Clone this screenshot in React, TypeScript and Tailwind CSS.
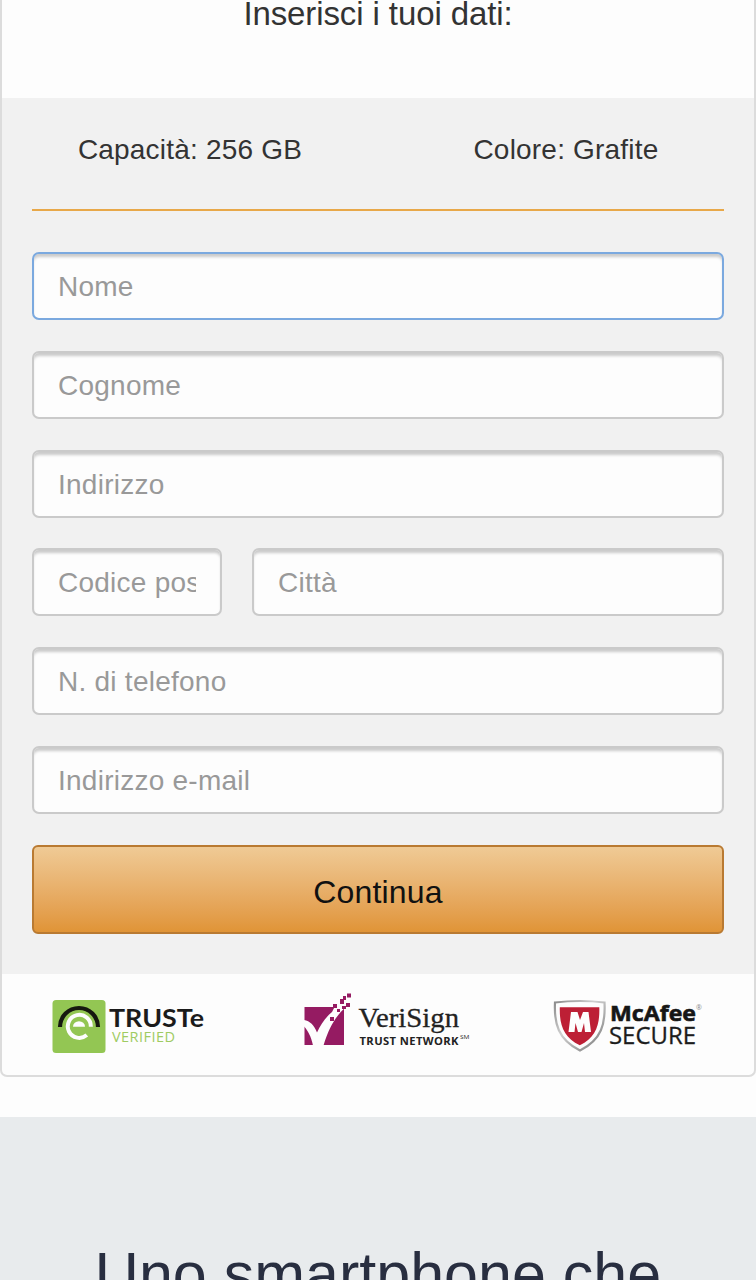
import clsx from 'clsx'

const options = ['Capacità: 256 GB', 'Colore: Grafite']

function Field({ label, className, active = false }: { label: string; className?: string; active?: boolean }) {
  return (
    <input
      type="text"
      placeholder={label}
      className={clsx(
        'block h-[68px] min-w-0 rounded-[7px] border-2 bg-[#fdfdfd] px-6 pt-0.5 text-[28px] tracking-[0.25px] text-[#333] shadow-[inset_0_4px_3px_-1px_rgba(0,0,0,0.2)] outline-none placeholder:text-[#999] placeholder:opacity-100',
        active ? 'border-[#7ba9df]' : 'border-[#cacaca]',
        className,
      )}
    />
  )
}

function TrusteLogo() {
  return (
    <svg width="156" height="64" viewBox="50 993 156 64">
      <rect x="52.5" y="1000" width="53" height="53" rx="3.5" fill="#93c653" />
      <path d="M60 1027a19 19 0 0 1 38 0" fill="none" stroke="#16180f" strokeWidth="4.2" />
      <path d="M90.800 1026.800a11.500 11.500 0 1 0-4 8.300" fill="none" stroke="#fdfdfd" strokeWidth="4" />
      <path d="M73 1026.800a6 5.600 0 0 1 12 0z" fill="#fdfdfd" />
      <text x="109" y="1026.5" fontSize="24" fontWeight="700" fill="#1b1b1b" textLength="95" lengthAdjust="spacingAndGlyphs" className="font-['Lato',sans-serif]">
        TRUSTe
      </text>
      <text x="112" y="1042" fontSize="14.500" fill="#9fcb62" textLength="63" lengthAdjust="spacing" className="font-['Open_Sans',sans-serif]">
        VERIFIED
      </text>
    </svg>
  )
}

function VerisignLogo() {
  return (
    <svg width="170" height="64" viewBox="302 993 170 64">
      <path d="M304.500 1007H344v38h-39.500z" fill="#951b62" />
      <path
        d="M304 1020c6 1 10 5 13 12.500 4-8.500 9-15.500 15-20.500l3-6 5-2 6 3c-8 7-16 17-22.500 38.500H313c-2-9-5-15-9-19z"
        fill="#fdfdfd"
      />
      <g fill="#951b62">
        <path d="M330 1017h4v4h-4zM333 1004h4v4h-4zM337 1009h3v3h-3z" />
        <path d="M340 999h4v5h-4zM343 996h3v4h-3zM347 993.500h4v4h-4zM346 1003h4v4h-4zM342 1006h4v3h-4z" />
      </g>
      <text x="358.500" y="1027" fontSize="28" fill="#222" stroke="#222" strokeWidth="0.300" textLength="100.500" lengthAdjust="spacingAndGlyphs" className="font-['Liberation_Serif',serif]">
        VeriSign
      </text>
      <text x="359.500" y="1045" fontSize="11.200" fontWeight="700" fill="#222" textLength="99" lengthAdjust="spacing" className="font-['Open_Sans',sans-serif]">
        TRUST NETWORK
      </text>
      <text x="460" y="1039" fontSize="5.500" fill="#333" textLength="9.500" lengthAdjust="spacingAndGlyphs" className="font-['Open_Sans',sans-serif]">
        SM
      </text>
    </svg>
  )
}

function McafeeLogo() {
  return (
    <svg width="150" height="64" viewBox="553 993 150 64">
      <defs>
        <linearGradient id="shield-rim" x1="0" y1="0" x2="1" y2="1">
          <stop offset="0" stopColor="#8b8b8b" />
          <stop offset="0.4" stopColor="#cfcfcf" />
          <stop offset="1" stopColor="#777" />
        </linearGradient>
      </defs>
      <path
        d="M555 1002.500q25-3 49.500 0c1 21-2.500 37-24.500 48-22-11-26-27-25-48z"
        fill="#fdfdfd"
        stroke="url(#shield-rim)"
        strokeWidth="2.200"
      />
      <path d="M559.800 1007.300h39.500c.5 17-3 30-19.500 38-16.500-8-20.500-21-20-38z" fill="#bd1f35" />
      <path
        d="M568.500 1032l2.500-20h6.500l2.500 8 3-8h5.500l2.500 20h-6l-1-9-2.500 9H578l-2.500-9-1 9z"
        fill="#fdfdfd"
      />
      <text x="610" y="1021" fontSize="22" fontWeight="700" fill="#161616" stroke="#161616" strokeWidth="0.600" textLength="86" lengthAdjust="spacingAndGlyphs" className="font-['Open_Sans',sans-serif]">
        McAfee
      </text>
      <text x="609" y="1044" fontSize="23.500" fill="#1c1c1c" stroke="#1c1c1c" strokeWidth="0.300" textLength="87" lengthAdjust="spacingAndGlyphs" className="font-['Open_Sans',sans-serif]">
        SECURE
      </text>
      <text x="696" y="1010" fontSize="7" fill="#888" className="font-['Open_Sans',sans-serif]">
        ®
      </text>
    </svg>
  )
}

export default function App() {
  return (
    <main className="h-[1280px] w-[756px] overflow-hidden bg-[#fdfdfd] font-['Liberation_Sans',Arial,sans-serif] text-[#333]">
      <div className="flex h-[1077px] flex-col overflow-hidden rounded-b-[7px] border-2 border-t-0 border-[#dcdcdc]">
        <h2 className="h-[98px] shrink-0 text-center text-[33px] leading-[28px] tracking-[-0.1px]">
          Inserisci i tuoi dati:
        </h2>

        <form className="h-[876px] shrink-0 bg-[#f1f1f1] px-[30px]">
          <div className="h-[113px] border-b-2 border-[#e8a849] pt-9">
            <div className="-mx-[30px] flex">
              {options.map((option) => (
                <p key={option} className="w-1/2 text-center text-[28px] leading-8 tracking-[0.2px]">
                  {option}
                </p>
              ))}
            </div>
          </div>

          <div className="mt-[41px] flex flex-col gap-[30.8px]">
            <Field label="Nome" active />
            <Field label="Cognome" />
            <Field label="Indirizzo" />
            <div className="flex gap-[30px]">
              <Field label="Codice postale" className="w-[190px]" />
              <Field label="Città" className="flex-1" />
            </div>
            <Field label="N. di telefono" />
            <Field label="Indirizzo e-mail" />
            <button
              type="button"
              className="h-[89px] rounded-[6px] border-2 border-[#b97a32] bg-linear-to-b from-[#efca95] to-[#e09436] pt-1.5 text-[32px] tracking-[0.2px] text-[#111]"
            >
              Continua
            </button>
          </div>
        </form>

        {/* Trust badges */}
        <div className="flex items-start pt-[19px] pl-12">
          <TrusteLogo />
          <div className="mr-[81px] ml-24">
            <VerisignLogo />
          </div>
          <McafeeLogo />
        </div>
      </div>

      <section className="mt-10 h-[163px] overflow-hidden bg-[#e8ebed] pt-[121px]">
        <h1 className="text-center text-[61px] leading-[72px] whitespace-nowrap text-[#282e40]">
          Uno smartphone che
        </h1>
      </section>
    </main>
  )
}
